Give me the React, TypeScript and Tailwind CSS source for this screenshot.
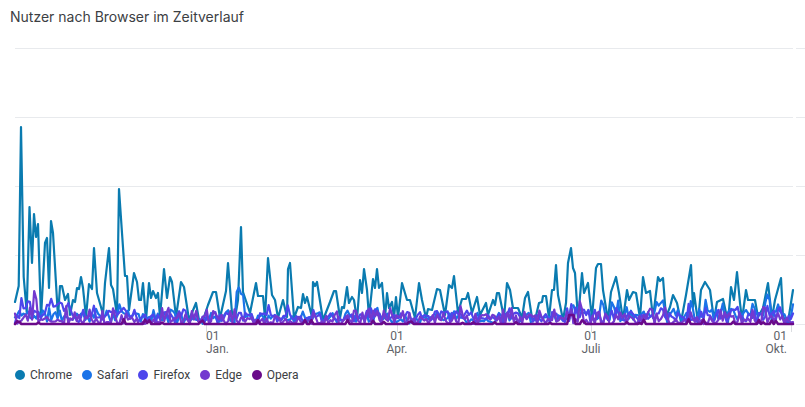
const chrome: [number, number][] = [
  [15,302],[18.7,286],[21,127],[23.7,277],[26.7,312],[29.5,207],[32,263],[34,214],[36,237],[38,224],[41,318],[45,243],[47,238],[49,288],[51,221],[53,233],[58,317],[60,286],[62,286],[65,300],[68,294],[70,315],[73,300],[75,302],[77,288],[79,289],[81,277],[83,288],[86,317],[89,284],[92,289],[94,248],[97,293],[101,307],[103,315],[105,283],[109,248],[111,285],[113,289],[117,315],[119,189],[122,233],[125,276],[127,276],[129,310],[134,273],[137,282],[139,300],[141,300],[143,283],[146,320],[149,283],[151,298],[153,291],[156,298],[158,293],[160,317],[164,269],[167,298],[170,277],[172,282],[176,317],[181,282],[184,287],[189,320],[196,303],[199,320],[203,320],[208,305],[213,292],[216,292],[220,318],[226,291],[228,263],[232,313],[235,318],[238,300],[241,227],[243,292],[250,313],[256,283],[258,296],[263,296],[265,318],[268,258],[272,295],[275,300],[278,318],[283,300],[287,317],[288,269],[290,263],[294,318],[298,307],[301,308],[303,294],[305,303],[307,297],[312,317],[313,282],[315,286],[317,282],[323,320],[330,302],[334,291],[336,291],[340,318],[342,307],[344,308],[347,287],[349,303],[352,297],[354,300],[357,320],[360,280],[362,293],[364,269],[367,290],[369,317],[373,279],[375,288],[377,269],[379,288],[382,283],[385,318],[387,293],[389,308],[392,302],[394,318],[396,297],[398,318],[402,283],[407,300],[410,300],[415,318],[419,283],[422,300],[426,318],[428,309],[432,310],[437,289],[440,290],[445,315],[449,285],[452,288],[454,276],[458,313],[462,299],[466,299],[468,293],[472,313],[477,297],[480,315],[486,303],[488,315],[493,300],[495,305],[497,293],[499,293],[504,318],[507,283],[510,290],[513,308],[518,308],[522,318],[525,298],[528,292],[532,318],[535,320],[539,303],[542,302],[543,296],[546,296],[549,318],[552,290],[554,290],[556,265],[558,295],[563,320],[566,303],[568,263],[571,248],[573,268],[575,273],[578,320],[582,273],[584,293],[588,283],[592,318],[596,268],[598,264],[601,264],[603,290],[608,320],[611,292],[616,277],[619,293],[623,320],[627,290],[629,300],[633,292],[636,293],[640,318],[643,277],[646,293],[650,291],[653,318],[658,277],[660,281],[663,278],[666,317],[670,307],[673,295],[677,303],[681,322],[686,295],[691,265],[693,307],[694,293],[698,322],[701,290],[705,282],[710,290],[714,320],[717,302],[723,299],[728,322],[731,287],[734,300],[737,272],[740,303],[742,320],[746,290],[748,300],[755,300],[758,317],[763,308],[768,283],[772,318],[775,300],[781,278],[783,317],[788,322],[793,290],
];

function rng(seed: number) {
  let a = seed;
  return () => {
    a = (a + 0x6d2b79f5) | 0;
    let t = Math.imul(a ^ (a >>> 15), 1 | a);
    t = (t + Math.imul(t ^ (t >>> 7), 61 | t)) ^ t;
    return ((t ^ (t >>> 14)) >>> 0) / 4294967296;
  };
}

function chromeHeight(x: number) {
  for (let i = 1; i < chrome.length; i++) {
    if (x <= chrome[i][0]) {
      const [x0, y0] = chrome[i - 1];
      const [x1, y1] = chrome[i];
      return 324 - (y0 + ((y1 - y0) * (x - x0)) / (x1 - x0));
    }
  }
  return 20;
}

const STEP = 778 / 365;
function series(seed: number, f: (h: number, r: () => number, x: number) => number) {
  const r = rng(seed);
  const out: string[] = [];
  for (let i = 0; i <= 365; i++) {
    const x = 15 + i * STEP;
    const h = Math.max(0, f(chromeHeight(x), r, x));
    out.push(`${x.toFixed(1)},${(324 - h).toFixed(1)}`);
  }
  return out.join(" ");
}

const capped = (h: number) => Math.min(h, 50);
const safari = series(11, (h, r, x) => {
  const late = x > 600 ? 1.7 : 1;
  return (r() * 6 + capped(h) * 0.3 * r()) * late + (x > 236 && x < 244 ? 22 : 0) + (x > 764 && x < 770 ? 12 : 0) + (x > 570 && x < 586 ? 10 : 0);
});
const firefox = series(23, (h, r, x) => r() * 9 + capped(h) * 0.28 * r() + (x > 20 && x < 30 ? 8 : 0) + (x > 50 && x < 72 ? 8 : 0));
const edge = series(37, (h, r, x) => r() * r() * 20 + (x > 34 && x < 38 ? 24 : 0) + (x > 578 && x < 584 ? 10 : 0));
const opera = series(51, (h, r, x) => {
  const v = r();
  if (x > 568 && x < 574) return 9;
  return v < 0.09 ? 1 + r() * 4 : 0;
});

const gridYs = [48, 117, 186, 255, 324];
const labelFont = "Roboto, sans-serif";
const ticks: { x: number; lx: number; anchor: "start" | "middle" | "end"; month: string }[] = [
  { x: 206, lx: 206, anchor: "start", month: "Jan." },
  { x: 397, lx: 397, anchor: "middle", month: "Apr." },
  { x: 591, lx: 591, anchor: "middle", month: "Juli" },
  { x: 791, lx: 787, anchor: "end", month: "Okt." },
];

const legend = [
  { name: "Chrome", dot: "bg-[#0a7bb0]" },
  { name: "Safari", dot: "bg-[#1a73e8]" },
  { name: "Firefox", dot: "bg-[#4d46ec]" },
  { name: "Edge", dot: "bg-[#7339cf]" },
  { name: "Opera", dot: "bg-[#6a0a8a]" },
];

export default function App() {
  return (
    <div className="w-[805px] h-[407px] bg-white overflow-hidden">
      <h2 className="pl-[10px] pt-[7px] h-[40px] text-[14px] leading-[20px] font-normal text-[#3c4043] font-['Inter',sans-serif]">
        Nutzer nach Browser im Zeitverlauf
      </h2>
      <svg width="805" height="320" viewBox="0 40 805 320" className="block">
        {gridYs.map((y) => (
          <g key={y} stroke="#e8eaed" strokeWidth="1">
            <line x1="15" x2="793" y1={y + 0.5} y2={y + 0.5} />
            <line x1="796" x2="805" y1={y + 0.5} y2={y + 0.5} />
          </g>
        ))}
        {ticks.map((t) => (
          <g key={t.month}>
            <line x1={t.x + 0.5} x2={t.x + 0.5} y1="325" y2="332" stroke="#dadce0" />
            <text x={t.lx} y="340" textAnchor={t.anchor} fontSize="12" fill="#5f6368" fontFamily={labelFont}>01</text>
            <text x={t.lx} y="353" textAnchor={t.anchor} fontSize="12" fill="#5f6368" fontFamily={labelFont}>{t.month}</text>
          </g>
        ))}
        <g fill="none" strokeLinejoin="round" strokeLinecap="round" strokeWidth="2.2">
          <polyline points={chrome.map((p) => p.join(",")).join(" ")} stroke="#0a7bb0" />
          <polyline points={safari} stroke="#1a73e8" />
          <polyline points={firefox} stroke="#4d46ec" />
          <polyline points={edge} stroke="#7339cf" />
          <polyline points={opera} stroke="#6a0a8a" strokeWidth="2.6" />
        </g>
      </svg>
      <div className="flex items-center gap-[10px] pl-[15px] mt-[5px] h-[20px] text-[12px] text-[#3c4043] font-['Roboto',sans-serif]">
        {legend.map((l) => (
          <div key={l.name} className="flex items-center gap-[5px]">
            <span className={`w-[10px] h-[10px] rounded-full ${l.dot}`} />
            <span>{l.name}</span>
          </div>
        ))}
      </div>
    </div>
  );
}
